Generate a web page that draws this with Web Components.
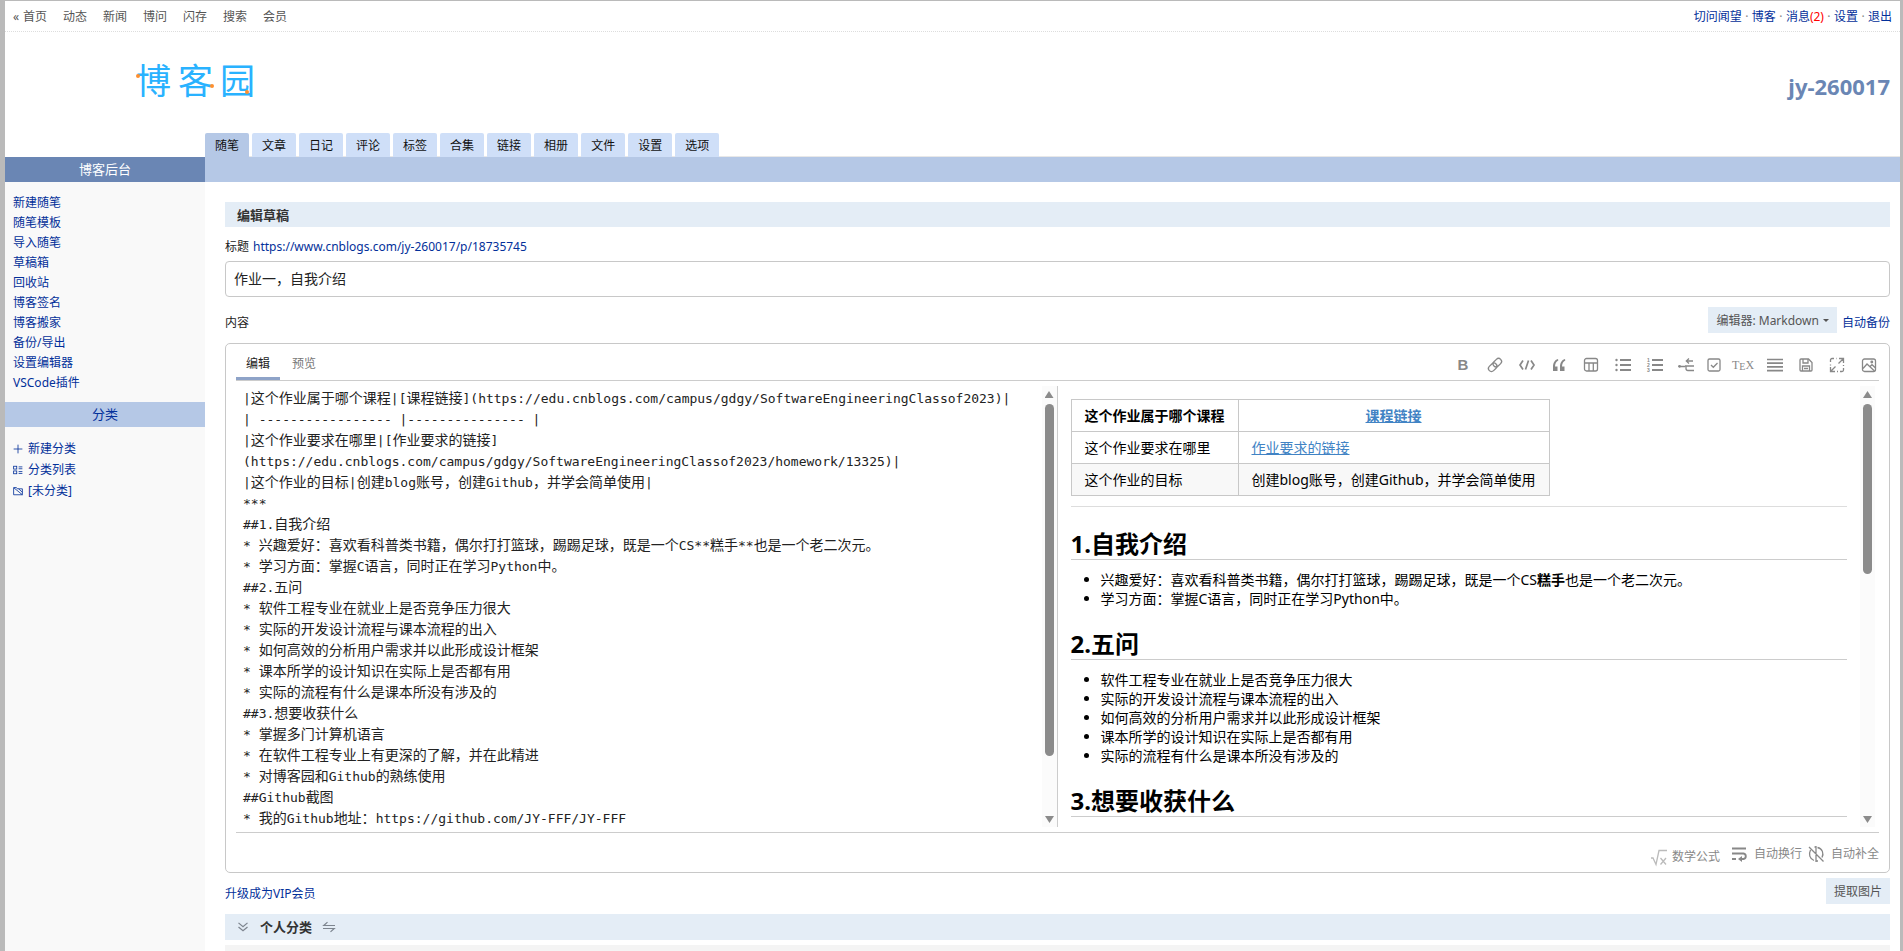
<!DOCTYPE html>
<html lang="zh-CN">
<head>
<meta charset="utf-8">
<title>编辑草稿 - 博客后台</title>
<style>
  html { --link: #03309a; --bar: #b5c8e6; --soft: #e4edf6; --line: #ccc; --muted: #888; }
  body { margin: 0; font: 12px/20px "Noto Sans", "Noto Sans CJK SC", sans-serif; color: #222; background: #fff; }
</style>
</head>
<body>
<blog-app></blog-app>
<script>
const COMMON = `*{box-sizing:border-box} a{color:var(--link);text-decoration:none} button,input{font:inherit;color:inherit;margin:0}
button{border:0;background:none;padding:0;cursor:pointer} ul{list-style:none;margin:0;padding:0}`;

function define(name, css, html) {
  customElements.define(name, class extends HTMLElement {
    constructor() {
      super();
      this.attachShadow({ mode: 'open' }).innerHTML = `<style>${COMMON}${css}</style>${typeof html === 'function' ? '' : html}`;
    }
    connectedCallback() {
      if (typeof html === 'function' && !this.ready) {
        this.ready = true;
        this.shadowRoot.innerHTML += html(this);
      }
    }
  });
}

/* Icon set */
const ICONS = {
  link: '<g transform="rotate(-45 8 8)"><rect x="0" y="5" width="9.500" height="6" rx="3"/><rect x="6.500" y="5" width="9.500" height="6" rx="3"/></g>',
  code: '<path stroke-width="1.700" d="M4 3.500 1 8l3 4.500M12 3.500 15 8l-3 4.500M9.500 3.500l-3 9"/>',
  quote: '<path fill="currentColor" stroke="none" d="M7 2C3.500 3 2 6 2 10v4h4.500V9.500H4c.1-3 1.200-4.900 3.300-6zM14 2c-3.500 1-5 4-5 8v4h4.500V9.500H11c.1-3 1.200-4.900 3.300-6z"/>',
  table: '<rect x="1.500" y="1.500" width="13" height="12.500" rx="2"/><path d="M1.500 6h13M6 6v8M10.300 6v8"/>',
  ul: '<path stroke-width="1.800" d="M5 3h11M5 8h11M5 13h11"/><g fill="currentColor" stroke="none"><circle cx="1.500" cy="3" r="1.200"/><circle cx="1.500" cy="8" r="1.200"/><circle cx="1.500" cy="13" r="1.200"/></g>',
  ol: '<path stroke-width="1.800" d="M5 3h11M5 8h11M5 13h11"/><g fill="currentColor" stroke="none" font-size="5" font-weight="700" font-family="Liberation Sans, sans-serif"><text x="0" y="4.500">1</text><text x="0" y="9.800">2</text><text x="0" y="15">3</text></g>',
  indent: '<path d="M1 9.500h6M8 4h7M11 1.500 8.300 4 11 6.500M16 9H7M16 13.500h-6q-2 0-2-2V9"/><circle cx="1.500" cy="9.300" r="1.400" fill="currentColor" stroke="none"/>',
  check: '<rect x="2" y="2" width="12" height="12" rx="1.500"/><path d="m5 8 2.300 2.300L11.500 6"/>',
  lines: '<path stroke-width="1.700" d="M0 2.500h16M0 6.200h16M0 9.900h16M0 13.600h16"/>',
  save: '<path d="M3 2h7.500L14 5.500V13a1 1 0 0 1-1 1H3a1 1 0 0 1-1-1V3a1 1 0 0 1 1-1z"/><path d="M5 2v4h5V2M4.500 14V9h7v5M6 11.500h4"/>',
  full: '<path d="M1.500 5V3a1.500 1.500 0 0 1 1.500-1.500h2M1.500 7.500v1M14.500 11v2a1.500 1.500 0 0 1-1.500 1.500h-2M10 1.500h4.500V6M6 14.500H1.500V10M14 2 9.500 6.500M2 14l4.500-4.500M7.500 1.500h.5M14.500 8v1M8 14.500h1"/>',
  image: '<rect x="1.500" y="2" width="13" height="12.500" rx="2"/><path d="m2 11.500 4-4.500 7.500 7M9 9.500l2-1.800 3.300 3"/><circle cx="10.800" cy="5" r=".8"/>',
  plus: '<path d="M8 1v14M1 8h14"/>',
  list: '<rect x="1" y="2" width="5" height="4.500"/><rect x="1" y="9.500" width="5" height="4.500"/><path d="M9 3h6M9 6h6M9 10.500h6M9 13.500h6"/>',
  folder: '<path d="M1 14V2.500h4.500L7 4.500h8V14zM1.500 3 15 14M9 4.500l6 5.500"/>',
  down: '<path stroke-width="1.700" d="m2 2.500 6 5 6-5M2 8l6 5 6-5"/>',
  swap: '<path stroke-width="1.600" d="M16 6H1l5-4.500M0 10h15l-5 4.500"/>',
  root: '<path d="M0 9h2l3 6.500L8 1.500h8M9.500 9l5.500 6.500M15 9l-5.500 6.500"/>',
  wrap: '<path stroke-width="1.900" d="M1 2.500h14M1 7.500h11.500a2.800 2.800 0 0 1 0 5.500H9M1 13h4"/><path fill="currentColor" stroke="none" d="M11 10v6l-4-3z"/>',
  auto: '<path d="M1 1 15.500 15.500M8 0v16M6.500 1H8M8 15h2M6 14.500C1.500 13 .500 8 2.500 4M9.500 1.500c5 1 6.500 6 4.500 10"/>'
};
define('app-icon', `:host{display:inline-flex;flex:none;width:16px;height:16px} svg{width:100%;height:100%;fill:none;stroke:currentColor;stroke-width:1.3;overflow:visible}`,
  el => `<svg viewBox="0 0 16 16" aria-hidden="true">${ICONS[el.getAttribute('name')]}</svg>`);

define('top-bar', `
  :host{box-sizing:border-box;display:flex;justify-content:space-between;height:31px;padding:2px 8px 0;align-items:center;border-bottom:1px dotted #ddd}
  nav{display:flex;gap:16px} nav a{color:#555} a i{display:inline-block;width:10px}
  .user{gap:0;color:#888} .user a{color:var(--link)} b{font-weight:400;color:#f00}
  i{font-style:normal} nav>i{width:10px;text-align:center}`,
  `<nav><a href="#"><i>«</i>首页</a>${['动态','新闻','博问','闪存','搜索','会员'].map(t => `<a href="#">${t}</a>`).join('')}</nav>
   <nav class="user"><a href="#">切问闻望</a><i>·</i><a href="#">博客</a><i>·</i><a href="#">消息<b>(2)</b></a><i>·</i><a href="#">设置</a><i>·</i><a href="#">退出</a></nav>`);

define('site-logo', `
  :host{display:block} a{position:relative;display:inline-flex;gap:7px;font-size:35px;line-height:40px;color:#29b2ff}
  i{position:absolute;width:4px;height:4px;border-radius:50%;background:#ff8f2e}
  .a{left:0;top:13px}.b{left:74px;top:23px}.c{left:109px;top:29px}`,
  `<a href="#" aria-label="博客园"><span>博</span><span>客</span><span>园</span><i class="a"></i><i class="b"></i><i class="c"></i></a>`);

define('site-header', `
  :host{display:grid;grid-template-columns:200px 1fr;grid-template-rows:1fr 24px;height:125px}
  .brand{grid-column:1/3;display:flex;justify-content:space-between;padding:29px 10px 0 131px}
  h1{margin:11px 0 0;font:700 22px/28px "Noto Sans",sans-serif;color:#6a86b4}
  ul{grid-column:2;display:flex;gap:3px;border-bottom:1px solid #e8e8e8}
  li{height:24px} li a{display:block;padding:3px 10px 0;height:24px;background:#cfdff8;color:#111;border-radius:2px 2px 0 0} li .on{background:var(--bar)}`,
  `<div class="brand"><site-logo></site-logo><h1>jy-260017</h1></div>
   <ul>${['随笔','文章','日记','评论','标签','合集','链接','相册','文件','设置','选项'].map((t, i) => `<li><a href="#" ${i ? '' : 'class="on"'}>${t}</a></li>`).join('')}</ul>`);

define('side-nav', `
  :host{display:block;background:#f9f9f9}
  h2{margin:0;font-size:13px;line-height:24px;font-weight:400;height:25px;text-align:center;background:#6a86b4;color:#fff}
  h2.sub{background:var(--bar);color:var(--link)}
  ul{padding:11px 8px 9px} .cats a{display:flex;align-items:center;gap:5px;line-height:21px}
  app-icon{width:10px;height:10px} li a{display:block}`,
  `<h2>博客后台</h2>
   <ul>${['新建随笔','随笔模板','导入随笔','草稿箱','回收站','博客签名','博客搬家','备份/导出','设置编辑器','VSCode插件'].map(t => `<li><a href="#">${t}</a></li>`).join('')}</ul>
   <h2 class="sub">分类</h2>
   <ul class="cats">${[['plus','新建分类'],['list','分类列表'],['folder','[未分类]']].map(([n, t]) => `<li><a href="#"><app-icon name="${n}"></app-icon>${t}</a></li>`).join('')}</ul>`);

define('scroll-rail', `
  :host{box-sizing:border-box;display:flex;flex-direction:column;width:15px;flex:none;background:#fbfbfb;padding:5px 3px 4px;gap:6px}
  i{height:7px;background:#8b8b8b;clip-path:polygon(50% 0,100% 100%,0 100%)} i.d{transform:rotate(180deg)}
  div{flex:1} span{display:block;height:var(--thumb);border-radius:5px;background:#8b8b8b}`,
  `<i></i><div><span></span></div><i class="d"></i>`);

const SOURCE = [
  '|这个作业属于哪个课程|[课程链接](https://edu.cnblogs.com/campus/gdgy/SoftwareEngineeringClassof2023)|',
  '| ----------------- |--------------- |',
  '|这个作业要求在哪里|[作业要求的链接]',
  '(https://edu.cnblogs.com/campus/gdgy/SoftwareEngineeringClassof2023/homework/13325)|',
  '|这个作业的目标|创建blog账号，创建Github，并学会简单使用|', '***', '##1.自我介绍',
  '* 兴趣爱好：喜欢看科普类书籍，偶尔打打篮球，踢踢足球，既是一个CS**糕手**也是一个老二次元。',
  '* 学习方面：掌握C语言，同时正在学习Python中。', '##2.五问', '* 软件工程专业在就业上是否竞争压力很大',
  '* 实际的开发设计流程与课本流程的出入', '* 如何高效的分析用户需求并以此形成设计框架', '* 课本所学的设计知识在实际上是否都有用',
  '* 实际的流程有什么是课本所没有涉及的', '##3.想要收获什么', '* 掌握多门计算机语言', '* 在软件工程专业上有更深的了解，并在此精进',
  '* 对博客园和Github的熟练使用', '##Github截图', '* 我的Github地址：https://github.com/JY-FFF/JY-FFF'];
/* Latin runs use the monospace face one step smaller than the ideographs */
define('md-source', `
  :host{box-sizing:border-box;display:flex;flex:none;width:50%;border-right:1px solid var(--line)}
  .text{flex:1;min-width:0;overflow:hidden;padding:1px 0 0 7px;font-family:"Noto Sans CJK SC",sans-serif;font-size:14px;line-height:21px;outline:0}
  .line{white-space:pre;height:21px} code{font:13px/20px "DejaVu Sans Mono",monospace} scroll-rail{--thumb:352px}`,
  `<div class="text" role="textbox" aria-multiline="true" aria-label="内容" contenteditable="true" spellcheck="false">${SOURCE.map(l => `<div class="line">${l.replace(/[\x20-\x7e]+/g, '<code>$&</code>')}</div>`).join('')}</div><scroll-rail></scroll-rail>`);

const lis = a => `<ul>${a.map(t => `<li>${t}</li>`).join('')}</ul>`;
define('md-preview', `
  :host{box-sizing:border-box;display:flex;flex:1 1 0;min-width:0;padding-right:4px;color:#000;font-size:14px;line-height:19px}
  article{flex:1;min-width:0;overflow:hidden;padding:13px 13px 0 13px}
  table{border-collapse:collapse;border-spacing:0} td,th{border:1px solid #c8c8c8;height:32px;padding:0 13px;text-align:left} th+th{text-align:center}
  tr:nth-child(3) td{background:#f8f8f8} a{color:#4183c4;text-decoration:underline}
  hr{border:0;border-top:1px solid #ddd;margin:10px 0 23px}
  h2{margin:22px 0 10px;padding-bottom:2px;font-size:24px;line-height:27px;font-weight:700;border-bottom:1px solid var(--line)}
  ul{list-style:disc;padding-left:30px} scroll-rail{--thumb:170px}`,
  `<article><table><tr><th>这个作业属于哪个课程</th><th><a href="#">课程链接</a></th></tr><tr><td>这个作业要求在哪里</td><td><a href="#">作业要求的链接</a></td></tr><tr><td>这个作业的目标</td><td>创建blog账号，创建Github，并学会简单使用</td></tr></table><hr>
   <h2>1.自我介绍</h2>${lis(['兴趣爱好：喜欢看科普类书籍，偶尔打打篮球，踢踢足球，既是一个CS<strong>糕手</strong>也是一个老二次元。','学习方面：掌握C语言，同时正在学习Python中。'])}
   <h2>2.五问</h2>${lis(['软件工程专业在就业上是否竞争压力很大','实际的开发设计流程与课本流程的出入','如何高效的分析用户需求并以此形成设计框架','课本所学的设计知识在实际上是否都有用','实际的流程有什么是课本所没有涉及的'])}
   <h2>3.想要收获什么</h2></article><scroll-rail></scroll-rail>`);

define('md-toolbar', `
  :host{display:flex;align-items:center;margin-right:-6px;padding-top:5px;color:var(--muted)}
  button{width:32px;height:24px;display:flex;align-items:center;justify-content:center} .w30{width:30px} .w26{width:26px}
  .b{font:700 15px/24px "Liberation Sans",sans-serif} .tex{font:12px/20px "Liberation Serif",serif} .tex i{font-style:normal;font-size:10px;padding-top:4px}`,
  `<button class="b" aria-label="加粗">B</button>` +
  [['link','链接'],['code','代码'],['quote','引用'],['table','表格'],['ul','无序列表'],['ol','有序列表'],['indent','缩进','w30'],['check','任务','w26'],0,['lines','对齐'],['save','保存','w30'],['full','全屏'],['image','图片']]
  .map(b => b ? `<button class="${b[2] || ''}" aria-label="${b[1]}"><app-icon name="${b[0]}"></app-icon></button>` : `<button class="tex" aria-label="公式">T<i>E</i>X</button>`).join(''));

define('md-editor', `
  :host{display:block;border:1px solid #c8c8c8;border-radius:5px;padding:0 10px}
  .head{display:flex;justify-content:space-between;height:37px;border-bottom:1px solid var(--line)}
  .tabs{display:flex;gap:2px} .tabs button{padding:4px 10px 0;height:36px;color:#777} .tabs .on{color:#222;border-bottom:3px solid #8ea3c8;padding-top:7px}
  .panes{display:flex;height:452px;padding:5px 0;border-bottom:1px solid var(--line)}
  .foot{display:flex;justify-content:flex-end;height:39px;padding-top:2px;align-items:center;gap:8px;color:var(--muted)}
  .foot button{display:flex;align-items:center;gap:7px} .foot .m{gap:5px;padding:6px 3px 0 0} .m app-icon{color:#bbb}
  .foot .g{margin-left:-2px}`,
  `<div class="head"><div class="tabs"><button class="on">编辑</button><button>预览</button></div><md-toolbar></md-toolbar></div>
   <div class="panes"><md-source></md-source><md-preview></md-preview></div>
   <div class="foot"><button class="m"><app-icon name="root"></app-icon>数学公式</button><button><app-icon name="wrap"></app-icon>自动换行</button><button class="g"><app-icon name="auto"></app-icon>自动补全</button></div>`);

define('section-title', `
  :host{display:flex;align-items:center;gap:11px;height:25px;padding:0 12px;background:var(--soft);font-size:13px;font-weight:700;color:#333;box-sizing:border-box}
  ::slotted(app-icon){width:12px;height:12px;color:#7d858f}`, `<slot></slot>`);

define('draft-form', `
  :host{display:flex;flex-direction:column;padding:20px 10px 0 20px;min-width:0}
  .title{margin-top:10px;display:flex;gap:4px}
  input{height:36px;margin-top:4px;width:100%;font-size:14px;padding:0 8px 2px;border:1px solid #c8c8c8;border-radius:4px;background:#fff}
  .row{display:flex;justify-content:space-between;align-items:flex-start;height:46px;padding-top:10px}
  .row>span{padding-top:6px} .right{display:flex;gap:5px} .right a{padding-top:6px}
  .btn{height:26px;padding:1px 8px 0;background:var(--soft);color:#555;display:flex;align-items:center;gap:4px}
  .caret{border:3px solid transparent;border-top-color:#555;border-bottom:0}
  .under{display:flex;justify-content:space-between;padding:5px 0 10px} .under a{padding-top:6px}
  .cat{height:26px} .filter{flex:1;min-height:6px;margin-top:5px;background:#f4f4f4}`,
  `<section-title>编辑草稿</section-title>
   <div class="title"><label for="t">标题</label><a href="#">https://www.cnblogs.com/jy-260017/p/18735745</a></div>
   <input id="t" type="text" value="作业一，自我介绍">
   <div class="row"><span>内容</span><div class="right"><button class="btn">编辑器: Markdown <span class="caret"></span></button><a href="#">自动备份</a></div></div>
   <md-editor></md-editor>
   <div class="under"><a href="#">升级成为VIP会员</a><button class="btn">提取图片</button></div>
   <section-title class="cat"><app-icon name="down"></app-icon>个人分类<app-icon name="swap"></app-icon></section-title>
   <div class="filter"></div>`);

define('blog-app', `
  :host{box-sizing:border-box;display:flex;flex-direction:column;min-height:100vh;border:solid #bababa;border-width:1px 3px 0 5px}
  .body{flex:1;display:grid;grid-template-columns:200px 1fr}
  main{display:flex;flex-direction:column;min-width:0} .strip{height:25px;background:var(--bar)} draft-form{flex:1}`,
  `<top-bar></top-bar><site-header></site-header><div class="body"><side-nav></side-nav><main><div class="strip"></div><draft-form></draft-form></main></div>`);
</script>
</body>
</html>
